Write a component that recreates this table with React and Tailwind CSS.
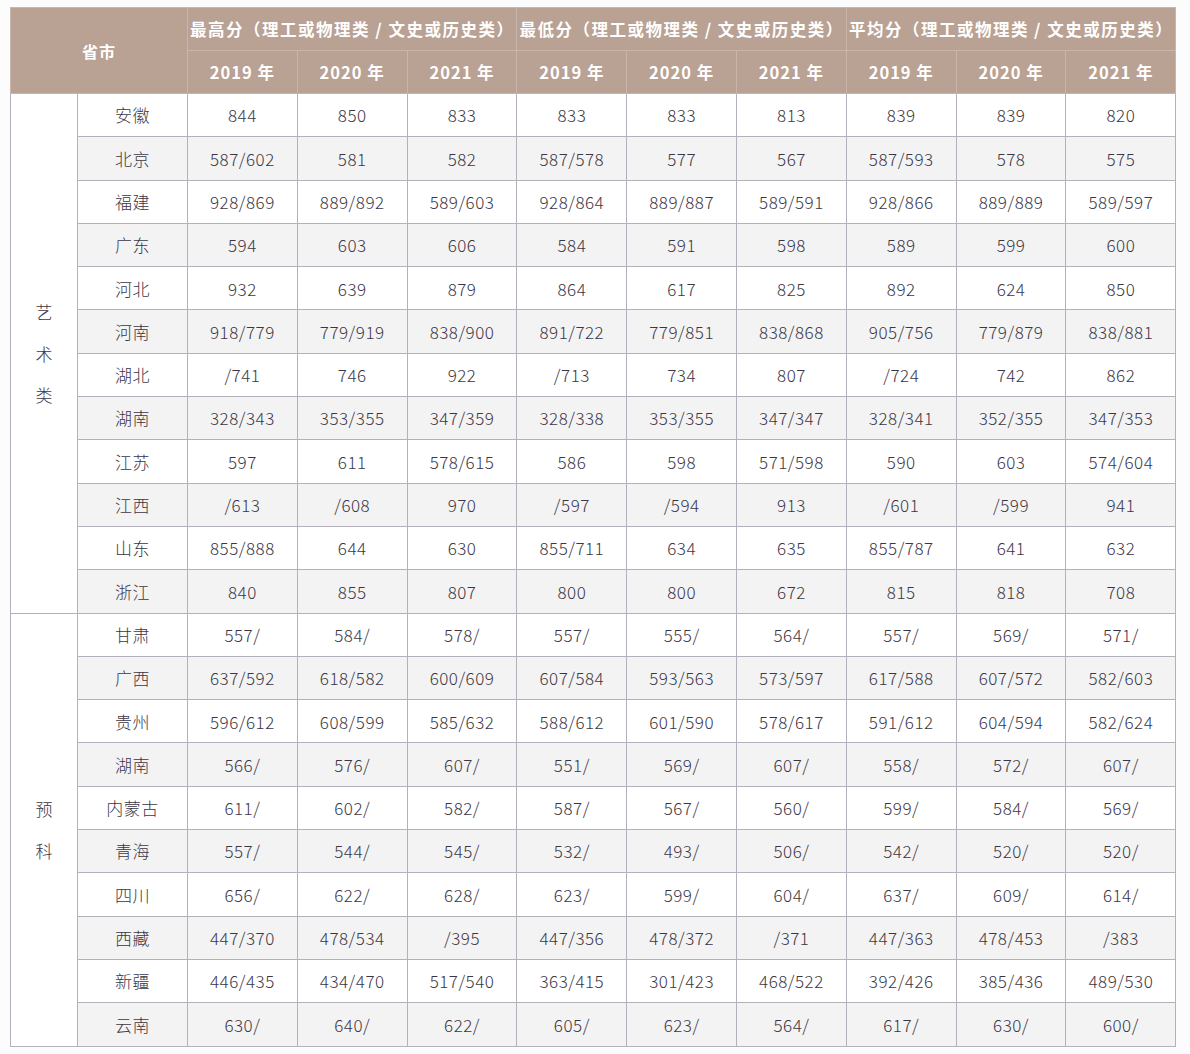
const years = ["2019 年", "2020 年", "2021 年"];
const groups = ["最高分（理工或物理类 / 文史或历史类）", "最低分（理工或物理类 / 文史或历史类）", "平均分（理工或物理类 / 文史或历史类）"];

const art = [
  ["安徽", "844", "850", "833", "833", "833", "813", "839", "839", "820"],
  ["北京", "587/602", "581", "582", "587/578", "577", "567", "587/593", "578", "575"],
  ["福建", "928/869", "889/892", "589/603", "928/864", "889/887", "589/591", "928/866", "889/889", "589/597"],
  ["广东", "594", "603", "606", "584", "591", "598", "589", "599", "600"],
  ["河北", "932", "639", "879", "864", "617", "825", "892", "624", "850"],
  ["河南", "918/779", "779/919", "838/900", "891/722", "779/851", "838/868", "905/756", "779/879", "838/881"],
  ["湖北", "/741", "746", "922", "/713", "734", "807", "/724", "742", "862"],
  ["湖南", "328/343", "353/355", "347/359", "328/338", "353/355", "347/347", "328/341", "352/355", "347/353"],
  ["江苏", "597", "611", "578/615", "586", "598", "571/598", "590", "603", "574/604"],
  ["江西", "/613", "/608", "970", "/597", "/594", "913", "/601", "/599", "941"],
  ["山东", "855/888", "644", "630", "855/711", "634", "635", "855/787", "641", "632"],
  ["浙江", "840", "855", "807", "800", "800", "672", "815", "818", "708"],
];

const prep = [
  ["甘肃", "557/", "584/", "578/", "557/", "555/", "564/", "557/", "569/", "571/"],
  ["广西", "637/592", "618/582", "600/609", "607/584", "593/563", "573/597", "617/588", "607/572", "582/603"],
  ["贵州", "596/612", "608/599", "585/632", "588/612", "601/590", "578/617", "591/612", "604/594", "582/624"],
  ["湖南", "566/", "576/", "607/", "551/", "569/", "607/", "558/", "572/", "607/"],
  ["内蒙古", "611/", "602/", "582/", "587/", "567/", "560/", "599/", "584/", "569/"],
  ["青海", "557/", "544/", "545/", "532/", "493/", "506/", "542/", "520/", "520/"],
  ["四川", "656/", "622/", "628/", "623/", "599/", "604/", "637/", "609/", "614/"],
  ["西藏", "447/370", "478/534", "/395", "447/356", "478/372", "/371", "447/363", "478/453", "/383"],
  ["新疆", "446/435", "434/470", "517/540", "363/415", "301/423", "468/522", "392/426", "385/436", "489/530"],
  ["云南", "630/", "640/", "622/", "605/", "623/", "564/", "617/", "630/", "600/"],
];

function Group({ label, rows, offset }) {
  return rows.map((r, i) => (
    <tr key={r[0] + i} className={(offset + i) % 2 === 0 ? "h-[43.3px] bg-white" : "h-[43.3px] bg-[#f3f3f3]"}>
      {i === 0 && (
        <td rowSpan={rows.length} className="border border-[#b4b1bd] bg-white align-middle">
          <div className="flex flex-col items-center gap-[16px]">
            {label.map((c) => (
              <span key={c}>{c}</span>
            ))}
          </div>
        </td>
      )}
      {r.map((v, j) => (
        <td key={j} className="border border-[#b4b1bd] text-center tracking-[0.5px]">
          {v}
        </td>
      ))}
    </tr>
  ));
}

export default function App() {
  return (
    <div className="w-[1190px] h-[1054px] bg-[#fcfcfc] pt-[7px] pl-[10px] font-['Noto_Sans_CJK_SC','Noto_Sans',sans-serif]">
      <table className="w-[1166px] table-fixed border-collapse text-[17px] font-light text-[#3b3646]">
        <colgroup>
          <col className="w-[67px]" />
          <col className="w-[110px]" />
          {Array.from({ length: 9 }).map((_, i) => (
            <col key={i} className="w-[109.8px]" />
          ))}
        </colgroup>
        <thead className="bg-[#b9a194] text-white font-bold">
          <tr className="h-[43px]">
            <th colSpan={2} rowSpan={2} className="border border-[#c9b5aa] text-[16px] tracking-[1px]">
              省市
            </th>
            {groups.map((g) => (
              <th key={g} colSpan={3} className="border border-[#c9b5aa] text-[16.5px] whitespace-nowrap tracking-[1.5px]">
                {g}
              </th>
            ))}
          </tr>
          <tr className="h-[43px]">
            {groups.map((g) =>
              years.map((y) => (
                <th key={g + y} className="border border-[#c9b5aa] text-[16.5px] tracking-[1px]">
                  {y}
                </th>
              ))
            )}
          </tr>
        </thead>
        <tbody>
          <Group label={["艺", "术", "类"]} rows={art} offset={0} />
          <Group label={["预", "科"]} rows={prep} offset={12} />
        </tbody>
      </table>
    </div>
  );
}
